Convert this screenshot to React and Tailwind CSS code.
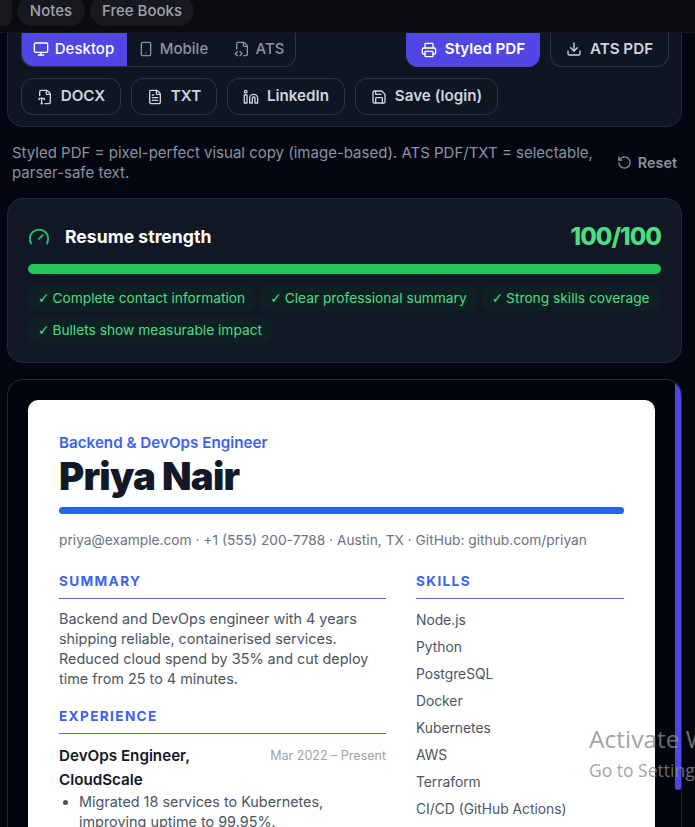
import React from 'react';
import { Monitor, Smartphone, FileCode2, Printer, Download, FileType2, FileText, Linkedin, Save, RotateCcw, Gauge } from 'lucide-react';

const font = { fontFamily: 'Inter, sans-serif' };

const OutlineButton = ({ icon: Icon, children, className = '' }) => (
    <button className={`flex items-center justify-center gap-2 rounded-xl border border-[#2c3444] text-[15.2px] font-semibold text-[#cfd4dc] ${className}`}>
        <Icon size={16} strokeWidth={2} />
        {children}
    </button>
);

const Heading = ({ children }) => (
    <div className="border-b border-[#4f63c9] pb-[7px] text-[13.6px] leading-[20px] font-bold tracking-[0.1em] text-[#3b63eb]">
        {children}
    </div>
);

const checks = [
    'Complete contact information',
    'Clear professional summary',
    'Strong skills coverage',
    'Bullets show measurable impact',
];

const skills = ['Node.js', 'Python', 'PostgreSQL', 'Docker', 'Kubernetes', 'AWS', 'Terraform', 'CI/CD (GitHub Actions)'];

export default function App() {
    return (
        <div className="relative flex h-[827px] w-[695px] flex-col overflow-hidden bg-[#030610]" style={font}>
            {/* top nav */}
            <div className="flex h-[33px] shrink-0 items-start gap-[5px] overflow-hidden border-b border-[#15171d] bg-[#0b0c11] pl-[17px]">
                <span className="-mt-[4px] -ml-[22px] h-[30px] w-[17px] rounded-full bg-[#18191f]" />
                <span className="-mt-[4px] flex h-[30px] w-[68px] items-center justify-center rounded-full bg-[#18191f] text-[15px] font-medium text-[#9ca3af]">Notes</span>
                <span className="-mt-[4px] flex h-[30px] w-[104px] items-center justify-center rounded-full bg-[#18191f] text-[15px] font-medium text-[#9ca3af]">Free Books</span>
            </div>

            {/* export panel */}
            <div className="mr-[13px] ml-[7px] flex h-[94px] shrink-0 flex-col gap-[11px] rounded-b-[16px] border border-t-0 border-[#20283a] bg-[#0f1522] pr-[12px] pl-[13px]">
                <div className="flex items-start justify-between">
                    <div className="flex h-[34px] w-[275px] rounded-b-xl rounded-t-none border border-t-0 border-[#2c3444]">
                        <div className="flex w-[105px] items-center justify-center gap-[6px] rounded-bl-xl bg-[#4f46e5] pr-[2px] pb-[1px] text-[15px] font-medium text-white">
                            <Monitor size={16} />
                            Desktop
                        </div>
                        <div className="flex w-[96px] items-center justify-center gap-[6px] pr-[4px] pb-[1px] text-[15px] font-medium text-[#8b93a1]">
                            <Smartphone size={16} />
                            Mobile
                        </div>
                        <div className="flex w-[72px] items-center justify-center gap-[6px] pb-[1px] text-[15px] font-medium text-[#8b93a1]">
                            <FileCode2 size={16} />
                            ATS
                        </div>
                    </div>
                    <div className="flex gap-[10px]">
                        <button className="flex h-[34px] w-[134px] items-center justify-center gap-2 rounded-b-xl bg-[#4f46e5] pb-[1px] text-[15.2px] font-semibold text-white">
                            <Printer size={16} />
                            Styled PDF
                        </button>
                        <OutlineButton icon={Download} className="h-[34px] w-[119px] rounded-t-none border-t-0 pb-[1px]">ATS PDF</OutlineButton>
                    </div>
                </div>
                <div className="flex gap-[10px]">
                    <OutlineButton icon={FileType2} className="h-[37px] w-[100px]">DOCX</OutlineButton>
                    <OutlineButton icon={FileText} className="h-[37px] w-[86px]">TXT</OutlineButton>
                    <OutlineButton icon={Linkedin} className="h-[37px] w-[118px]">LinkedIn</OutlineButton>
                    <OutlineButton icon={Save} className="h-[37px] w-[143px]">Save (login)</OutlineButton>
                </div>
            </div>

            {/* note */}
            <div className="mt-[16px] flex items-center justify-between pr-[18px] pl-[12px]">
                <p className="w-[590px] text-[15px] leading-[20px] text-[#8b93a1]">
                    Styled PDF = pixel-perfect visual copy (image-based). ATS PDF/TXT = selectable, parser-safe text.
                </p>
                <button className="flex items-center gap-[6px] text-[14.4px] font-semibold text-[#8b93a1]">
                    <RotateCcw size={15} />
                    Reset
                </button>
            </div>

            {/* strength */}
            <div className="mt-[15px] mr-[13px] ml-[7px] h-[165px] shrink-0 rounded-[16px] border border-[#20283a] bg-[#111725] px-[20px] pt-[22px]">
                <div className="flex h-[32px] items-center justify-between">
                    <div className="flex items-center gap-[15px]">
                        <Gauge size={22} className="text-[#1fc46e]" />
                        <span className="text-[17.6px] font-bold text-white">Resume strength</span>
                    </div>
                    <span className="text-[24px] font-extrabold tracking-[-0.04em] text-[#4ade80]">100/100</span>
                </div>
                <div className="mt-[11px] h-[10px] rounded-full bg-[#22c55e]" />
                <div className="mt-[11px] flex flex-wrap gap-x-[5px] gap-y-[6px]">
                    {checks.map((c) => (
                        <span key={c} className="rounded-lg bg-[#0e2023] px-[10px] py-[3px] text-[13.76px] leading-[20px] text-[#4ade80]">
                            <span className="mr-[-1px] font-['DejaVu_Sans']">✓</span> {c}
                        </span>
                    ))}
                </div>
            </div>

            {/* preview */}
            <div className="relative mt-[16px] mr-[13px] ml-[7px] flex-1 overflow-hidden rounded-t-[16px] border border-b-0 border-[#20283a] bg-[#02050d] px-[20px] pt-[20px]">
                <div className="absolute top-0 right-0 h-[410px] w-[6px] rounded-full bg-[#4f46e5]" />
                <div className="w-[627px] rounded-t-[10px] bg-white px-[31px] pt-[33px]">
                    <div className="text-[15.2px] leading-[20px] font-semibold text-[#3b63eb]">Backend & DevOps Engineer</div>
                    <h1 className="text-[38.4px] leading-[46px] font-black tracking-[-0.02em] text-[#111827]">Priya Nair</h1>
                    <div className="mt-[8px] h-[7px] rounded-full bg-[#2563eb]" />
                    <div className="mt-[16px] text-[13.76px] leading-[20px] text-[#6b7280]">
                        priya@example.com · +1 (555) 200-7788 · Austin, TX · GitHub: github.com/priyan
                    </div>
                    <div className="mt-[21px] flex gap-[30px]">
                        <div className="w-[327px] shrink-0">
                            <Heading>SUMMARY</Heading>
                            <p className="mt-[10px] text-[14.4px] leading-[20px] text-[#4b5563]">
                                Backend and DevOps engineer with 4 years shipping reliable, containerised services. Reduced cloud spend by 35% and cut deploy time from 25 to 4 minutes.
                            </p>
                            <div className="mt-[17px]">
                                <Heading>EXPERIENCE</Heading>
                            </div>
                            <div className="mt-[10px] flex items-start justify-between">
                                <div className="w-[170px] text-[15.2px] leading-[24px] font-semibold text-[#111827]">DevOps Engineer, CloudScale</div>
                                <div className="text-[12.5px] leading-[24px] text-[#9ca3af]">Mar 2022 – Present</div>
                            </div>
                            <ul className="list-disc pl-[20px] text-[14.4px] leading-[20px] text-[#4b5563]">
                                <li>Migrated 18 services to Kubernetes, improving uptime to 99.95%.</li>
                            </ul>
                        </div>
                        <div className="flex-1">
                            <Heading>SKILLS</Heading>
                            <div className="mt-[8px] flex flex-col">
                                {skills.map((s) => (
                                    <div key={s} className="text-[13.8px] leading-[27px] text-[#4b5563]">{s}</div>
                                ))}
                            </div>
                        </div>
                    </div>
                </div>
            </div>

            {/* windows watermark */}
            <div className="pointer-events-none absolute top-[724px] left-[589px] whitespace-nowrap text-[#8a8a8a]/80" style={{ fontFamily: '"Open Sans", sans-serif' }}>
                <div className="text-[24.5px] leading-[30px]">Activate Windows</div>
                <div className="text-[17.5px] leading-[32px]">Go to Settings to activate Windows.</div>
            </div>
        </div>
    );
}
